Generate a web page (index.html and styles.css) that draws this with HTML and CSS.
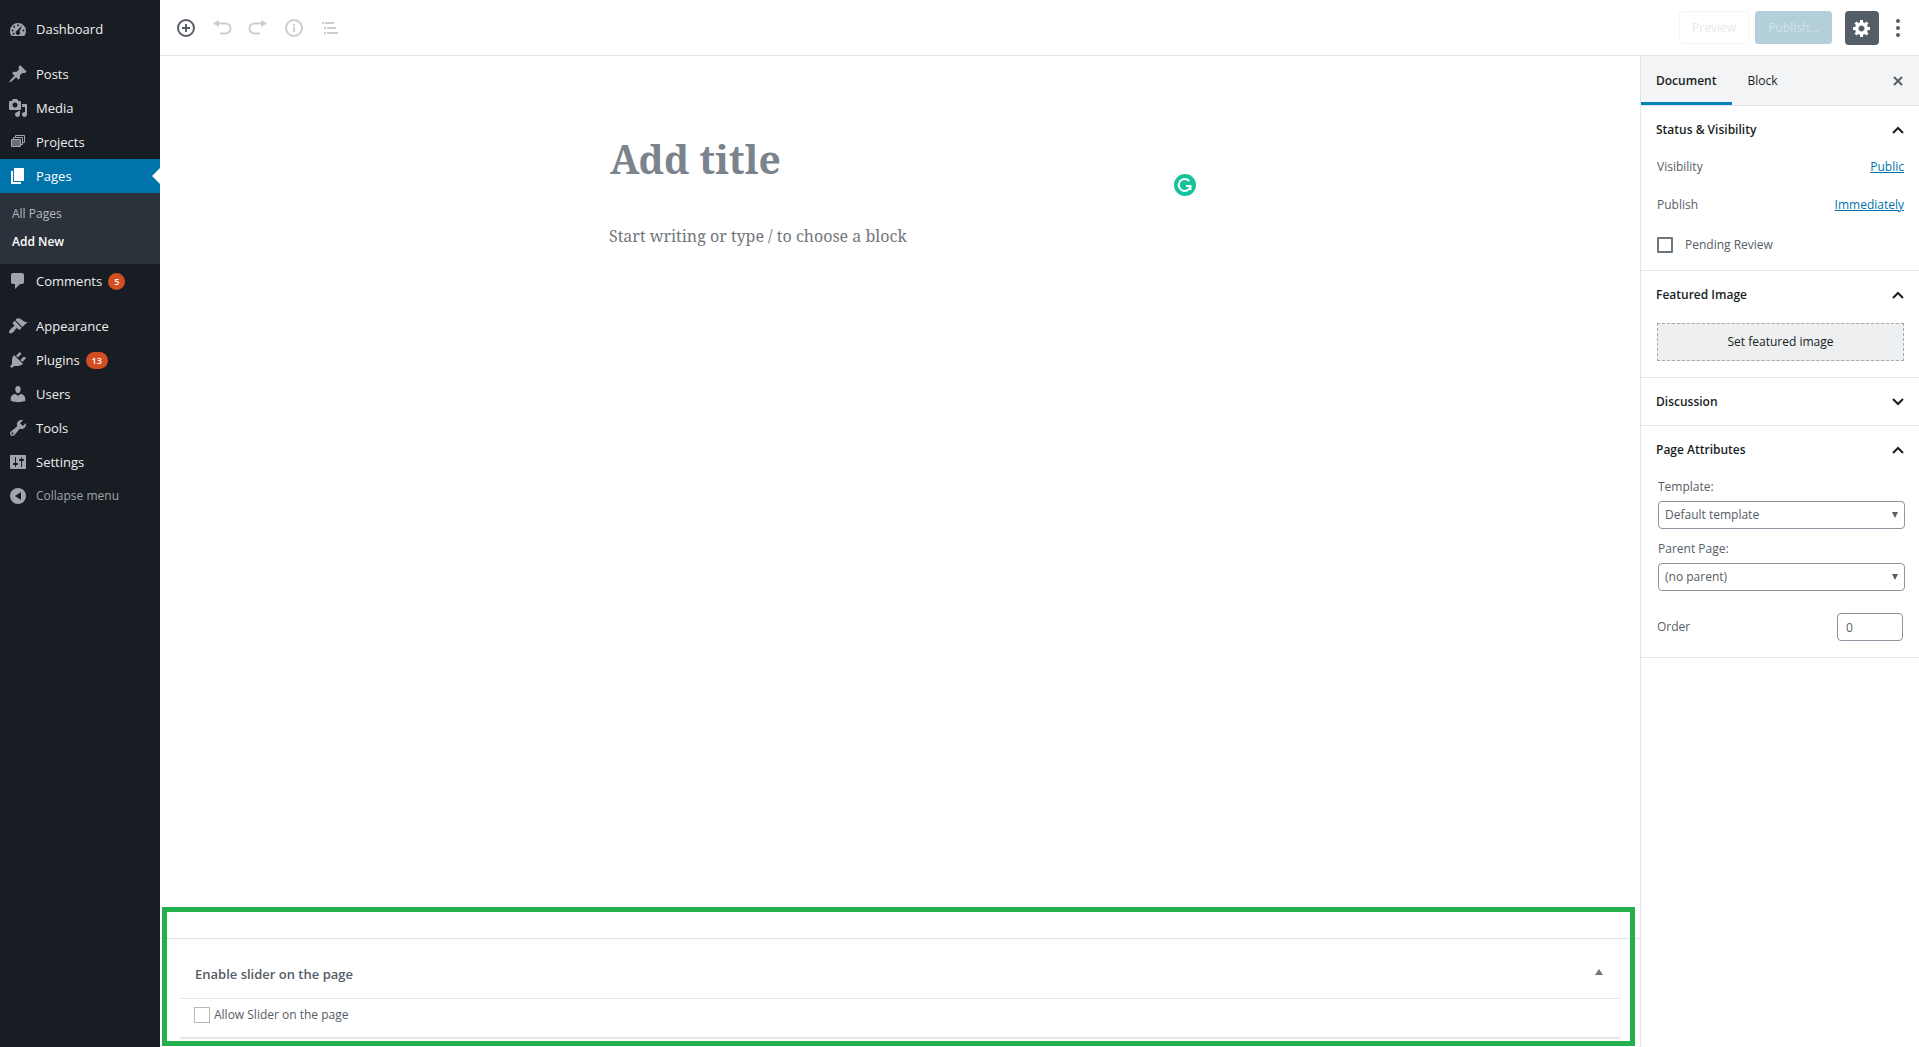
FILE: index.html
```html
<!DOCTYPE html>
<html lang="en">
<head>
    <meta charset="UTF-8">
    <meta name="viewport" content="width=device-width, initial-scale=1.0">
    <title>Add New Page</title>
    <link rel="stylesheet" href="styles.css">
</head>
<body>
    <nav class="menu">
        <a class="item" href="#"><svg viewBox="0 0 20 20"><path fill-rule="evenodd" d="M3.8 17h12.4c1.1-1.3 1.8-3.1 1.8-5a8 8 0 0 0-16 0c0 1.900.7 3.700 1.800 5zM10 5.200a1 1 0 1 1 0 2 1 1 0 0 1 0-2zM6.200 6.700a1 1 0 1 1 0 2 1 1 0 0 1 0-2zM4.600 10.400a1 1 0 1 1 0 2 1 1 0 0 1 0-2zM15.400 10.400a1 1 0 1 1 0 2 1 1 0 0 1 0-2zM14 6.200l-2.300 6.300a2.200 2.200 0 1 1-2.500-.9zM5.500 13.800a1 1 0 1 1 0 2 1 1 0 0 1 0-2z"/></svg>Dashboard</a>
        <a class="item group" href="#"><svg viewBox="0 0 20 20"><path d="M10.440 3.020l1.820-1.820 6.360 6.350-1.830 1.820c-1.050-.68-2.480-.57-3.410.36l-.75.75c-.92.93-1.040 2.350-.35 3.410l-1.830 1.820-2.410-2.410-2.800 2.790c-.42.42-3.380 2.710-3.800 2.290s1.860-3.390 2.280-3.810l2.790-2.790L4.100 9.360l1.830-1.820c1.050.69 2.480.57 3.400-.36l.75-.75c.93-.92 1.050-2.350.36-3.410z"/></svg>Posts</a>
        <a class="item" href="#"><svg viewBox="0 0 20 20"><path fill-rule="evenodd" d="M13 11V4c0-.55-.45-1-1-1h-1.670L9 1H5L3.670 3H2c-.55 0-1 .45-1 1v7c0 .55.45 1 1 1h10c.55 0 1-.45 1-1zM7 4.500c1.380 0 2.500 1.120 2.500 2.500S8.380 9.500 7 9.500 4.500 8.380 4.500 7 5.620 4.500 7 4.500zM14 6h5v10.500c0 1.380-1.120 2.500-2.500 2.500S14 17.880 14 16.500s1.120-2.500 2.500-2.500c.17 0 .34.020.5.050V9h-3V6zm-4 8.050V13h2v3.500c0 1.380-1.120 2.500-2.500 2.500S7 17.880 7 16.500 8.120 14 9.500 14c.17 0 .34.020.5.050z"/></svg>Media</a>
        <a class="item" href="#"><svg class="outline" viewBox="0 0 20 20"><path d="M7.500 5V3.500h9v7H15M5.500 7V5.500h9v7H13"/><path class="front" d="M3.500 7.500h9v7h-9z"/></svg>Projects</a>
        <a class="item current" href="#"><svg viewBox="0 0 20 20"><path d="M6 15V2h10v13H6zm-1 1h8v2H3V5h2v11z"/></svg>Pages</a>
        <div class="submenu">
            <a href="#">All Pages</a>
            <a class="active" href="#">Add New</a>
        </div>
        <a class="item" href="#"><svg viewBox="0 0 20 20"><path d="M5 2h9c1.100 0 2 .9 2 2v7c0 1.100-.9 2-2 2h-2l-5 5v-5H5c-1.100 0-2-.9-2-2V4c0-1.100.9-2 2-2z"/></svg>Comments <span class="count">5</span></a>
        <a class="item group" href="#"><svg viewBox="0 0 20 20"><path d="M14.480 11.060L7.410 3.990l1.500-1.500c.5-.56 2.300-.47 3.510.32 1.210.8 1.430 1.280 2.910 2.100 1.180.64 2.450 1.260 4.450.85zm-.71.71L6.700 4.700 4.930 6.470c-.39.39-.39 1.020 0 1.410l1.060 1.060c.39.39.39 1.030 0 1.420-.6.6-1.430 1.110-2.210 1.690-.35.26-.7.53-1.010.84C1.430 14.230.4 16.080 1.400 17.070c.99 1 2.840-.03 4.180-1.360.31-.31.58-.66.850-1.020.57-.78 1.080-1.610 1.690-2.210.39-.39 1.020-.39 1.410 0l1.060 1.060c.39.39 1.020.39 1.410 0z"/></svg>Appearance</a>
        <a class="item" href="#"><svg viewBox="0 0 20 20"><path d="M13.110 4.360L9.870 7.600 8 5.730l3.240-3.240c.35-.34 1.050-.2 1.560.320.520.510.660 1.210.310 1.550zm-8 1.770l.91-1.120 9.010 9.010-1.190.84c-.71.710-2.630 1.160-3.820 1.160H6.140L4.900 17.260c-.59.590-1.540.590-2.120 0-.59-.58-.59-1.530 0-2.120l1.240-1.240v-3.880c0-1.130.4-3.190 1.090-3.890zm7.260 3.970l3.240-3.240c.340-.350 1.040-.210 1.550.310.520.510.660 1.210.310 1.550l-3.240 3.250z"/></svg>Plugins <span class="count">13</span></a>
        <a class="item" href="#"><svg viewBox="0 0 20 20"><path d="M10 9.250c-2.270 0-2.730-3.440-2.730-3.440C7 4.020 7.820 2 9.970 2c2.160 0 2.980 2.020 2.710 3.810 0 0-.41 3.440-2.680 3.440zm0 2.570L12.720 10c2.390 0 4.520 2.330 4.520 4.530v2.490s-3.650 1.130-7.240 1.130c-3.650 0-7.240-1.130-7.240-1.130v-2.490c0-2.250 1.940-4.480 4.470-4.480z"/></svg>Users</a>
        <a class="item" href="#"><svg viewBox="0 0 20 20"><path fill-rule="evenodd" d="M16.680 9.770c-1.340 1.340-3.300 1.670-4.950.99l-5.410 6.520c-.99.990-2.590.990-3.580 0s-.99-2.590 0-3.570l6.520-5.420c-.68-1.650-.35-3.610.99-4.950 1.280-1.280 3.120-1.620 4.720-1.060l-2.890 2.890 2.820 2.820 2.860-2.870c.53 1.580.18 3.390-1.080 4.650zM3.810 16.210c.4.390 1.040.390 1.430 0 .4-.4.4-1.040 0-1.430-.39-.4-1.030-.4-1.430 0-.39.390-.39 1.030 0 1.430z"/></svg>Tools</a>
        <a class="item" href="#"><svg viewBox="0 0 20 20"><path fill-rule="evenodd" d="M18 16V4c0-.55-.45-1-1-1H3c-.55 0-1 .45-1 1v12c0 .55.450 1 1 1h14c.55 0 1-.450 1-1zM8 11h1c.55 0 1 .450 1 1s-.45 1-1 1H8v1.500c0 .28-.22.5-.5.5s-.5-.22-.5-.5V13H6c-.55 0-1-.450-1-1s.45-1 1-1h1V5.500c0-.28.220-.5.5-.5s.5.220.5.5V11zm5-2h-1c-.55 0-1-.450-1-1s.45-1 1-1h1V5.500c0-.28.220-.5.5-.5s.5.220.5.5V7h1c.55 0 1 .450 1 1s-.45 1-1 1h-1v5.500c0 .280-.22.5-.5.5s-.5-.22-.5-.5V9z"/></svg>Settings</a>
        <button type="button" class="item collapse"><svg viewBox="0 0 20 20"><path fill-rule="evenodd" d="M10 2a8 8 0 1 1 0 16 8 8 0 0 1 0-16zm3 12V6l-6 4z"/></svg>Collapse menu</button>
    </nav>

    <div class="editor">
        <header class="toolbar">
            <button type="button" class="tool enabled" aria-label="Add block"><svg viewBox="0 0 20 20"><circle cx="10" cy="10" r="8"/><path d="M10 6v8M6 10h8"/></svg></button>
            <button type="button" class="tool" aria-label="Undo"><svg viewBox="0 0 20 20"><path class="solid" d="M7 2v7L1 5.500z"/><path d="M6 5.500h7.500a3.800 3.800 0 0 1 0 10H8"/></svg></button>
            <button type="button" class="tool" aria-label="Redo"><svg viewBox="0 0 20 20"><path class="solid" d="M13 2v7l6-3.500z"/><path d="M14 5.500H6.500a3.800 3.800 0 0 0 0 10H12"/></svg></button>
            <button type="button" class="tool" aria-label="Content structure"><svg viewBox="0 0 20 20"><circle cx="10" cy="10" r="8"/><path d="M10 9v5M10 6v2"/></svg></button>
            <button type="button" class="tool" aria-label="Block navigation"><svg viewBox="0 0 20 20"><path d="M5 5h9M7 10h9M7 15h11M2 5h2M4 10h2M4 15h2"/></svg></button>
            <div class="actions">
                <button type="button" class="preview" disabled>Preview</button>
                <button type="button" class="publish" disabled>Publish...</button>
                <button type="button" class="gear" aria-label="Settings"><svg viewBox="0 0 20 20"><path fill-rule="evenodd" d="M18 12h-2.180c-.17.700-.44 1.350-.81 1.930l1.540 1.540-2.100 2.100-1.540-1.540c-.58.360-1.230.630-1.910.790V19H8v-2.180c-.68-.16-1.330-.43-1.910-.79l-1.540 1.540-2.120-2.120 1.540-1.540c-.36-.58-.63-1.230-.79-1.910H1V9.030h2.170c.160-.700.440-1.350.800-1.940L2.430 5.550l2.100-2.100 1.540 1.540c.58-.37 1.240-.64 1.930-.81V2h3v2.180c.68.160 1.330.430 1.910.790l1.540-1.540 2.120 2.120-1.540 1.540c.360.590.640 1.240.800 1.940H18V12zm-8.500 1.500c1.660 0 3-1.340 3-3s-1.340-3-3-3-3 1.340-3 3 1.340 3 3 3z"/></svg></button>
                <button type="button" class="more" aria-label="More tools"><svg viewBox="0 0 6 20"><circle cx="3" cy="3" r="2"/><circle cx="3" cy="10" r="2"/><circle cx="3" cy="17" r="2"/></svg></button>
            </div>
        </header>

        <div class="columns">
            <main class="content">
                <div class="writing">
                    <div class="title-wrap">
                        <input class="title" type="text" placeholder="Add title" aria-label="Add title">
                        <svg class="checker" viewBox="0 0 22 22"><circle class="disc" cx="11" cy="11" r="11"/><path d="M15.200 7A6 6 0 1 0 16.500 12.500M12 12h4.500v4"/></svg>
                    </div>
                    <input class="paragraph" type="text" placeholder="Start writing or type / to choose a block" aria-label="Add block">
                </div>
                <section class="metaboxes">
                    <div class="postbox">
                        <div class="postbox-head">
                            <h2>Enable slider on the page</h2>
                            <button type="button" aria-label="Toggle panel"><svg viewBox="0 0 8 6"><path d="M4 0l4 6H0z"/></svg></button>
                        </div>
                        <div class="postbox-body">
                            <input type="checkbox" id="slider">
                            <label for="slider">Allow Slider on the page</label>
                        </div>
                    </div>
                    <div class="highlight"></div>
                </section>
            </main>

            <aside class="settings">
                <div class="tabs">
                    <button type="button" class="tab selected">Document</button>
                    <button type="button" class="tab">Block</button>
                    <button type="button" class="close" aria-label="Close settings"><svg viewBox="0 0 12 12"><path d="M2 2l8 8M10 2l-8 8"/></svg></button>
                </div>
                <section class="panel">
                    <h2><button type="button">Status &amp; Visibility<svg viewBox="0 0 12 8"><path d="M1 7l5-5 5 5"/></svg></button></h2>
                    <div class="row"><span>Visibility</span><a href="#">Public</a></div>
                    <div class="row"><span>Publish</span><a href="#">Immediately</a></div>
                    <div class="row check">
                        <input type="checkbox" id="pending">
                        <label for="pending">Pending Review</label>
                    </div>
                </section>
                <section class="panel featured">
                    <h2><button type="button">Featured Image<svg viewBox="0 0 12 8"><path d="M1 7l5-5 5 5"/></svg></button></h2>
                    <button type="button" class="set-image">Set featured image</button>
                </section>
                <section class="panel closed">
                    <h2><button type="button">Discussion<svg viewBox="0 0 12 8"><path d="M1 1l5 5 5-5"/></svg></button></h2>
                </section>
                <section class="panel featured">
                    <h2><button type="button">Page Attributes<svg viewBox="0 0 12 8"><path d="M1 7l5-5 5 5"/></svg></button></h2>
                    <div class="field">
                        <label for="template">Template:</label>
                        <select id="template"><option>Default template</option></select>
                    </div>
                    <div class="field">
                        <label for="parent">Parent Page:</label>
                        <select id="parent"><option>(no parent)</option></select>
                    </div>
                    <div class="order">
                        <label for="order">Order</label>
                        <input type="text" id="order" value="0">
                    </div>
                </section>
            </aside>
        </div>
    </div>
</body>
</html>
```
FILE: styles.css
```css
* {
    box-sizing: border-box;
}
body {
    display: flex;
    min-height: 100vh;
    margin: 0;
    background: #fff;
    color: #555d66;
    font-family: "Segoe UI", "Open Sans", "Noto Sans", sans-serif;
    font-size: 12px;
    line-height: 18px;
}
button, input, select {
    font: inherit;
    color: inherit;
}
button {
    padding: 0;
    border: none;
    background: none;
    cursor: pointer;
}
h2 {
    margin: 0;
    font-size: inherit;
}

/* admin menu */
.menu {
    flex: none;
    width: 160px;
    padding-top: 12px;
    background: #181d23;
}
.item {
    position: relative;
    display: flex;
    align-items: center;
    width: 100%;
    height: 34px;
    padding-left: 8px;
    color: #eee;
    font-size: 13px;
    text-decoration: none;
}
.item svg {
    flex: none;
    width: 20px;
    height: 20px;
    margin-right: 8px;
    fill: #a0a5aa;
}
.item .outline {
    fill: none;
    stroke: #a0a5aa;
}
.outline .front {
    fill: #6c7075;
}
.group {
    margin-top: 11px;
}
.current {
    background: #0073aa;
    color: #fff;
}
.current svg {
    fill: #fff;
}
.current::after {
    content: "";
    position: absolute;
    right: 0;
    border: 8px solid transparent;
    border-left: none;
    border-right-color: #fff;
}
.submenu {
    padding: 7px 0 8px;
    background: #2b323a;
}
.submenu a {
    display: block;
    padding: 5px 12px;
    color: #b4b9be;
    text-decoration: none;
}
.submenu .active {
    color: #fff;
    font-weight: 600;
}
.count {
    min-width: 17px;
    margin-left: 6px;
    padding: 0 6px;
    border-radius: 9px;
    background: #d54e21;
    color: #fff;
    font-size: 9px;
    font-weight: 600;
    line-height: 17px;
    text-align: center;
}
.collapse {
    color: #a0a5aa;
    font-size: 12px;
}

/* top bar */
.editor {
    display: flex;
    flex: 1;
    flex-direction: column;
    min-width: 0;
}
.toolbar {
    display: flex;
    align-items: center;
    height: 56px;
    padding: 0 12px 0 8px;
    border-bottom: 1px solid #e2e4e7;
}
.tool {
    width: 36px;
    height: 36px;
    opacity: 0.3;
}
.enabled {
    opacity: 1;
}
.tool svg {
    display: block;
    width: 20px;
    height: 20px;
    margin: 0 auto;
    fill: none;
    stroke: #555d66;
    stroke-width: 2;
}
.tool .solid {
    fill: #555d66;
    stroke: none;
}
.actions {
    display: flex;
    align-items: center;
    margin-left: auto;
}
.preview, .publish {
    height: 33px;
    border: 1px solid #f3f4f4;
    border-radius: 3px;
}
.preview {
    width: 70px;
    margin-right: 6px;
    color: #e6e8ea;
}
.publish {
    width: 77px;
    border-color: #b3cfda;
    background: #b3cfda;
    color: #d0e5ed;
}
.gear {
    width: 34px;
    height: 34px;
    margin: 0 11px 0 13px;
    border-radius: 4px;
    background: #555d66;
}
.gear svg {
    display: block;
    width: 20px;
    height: 20px;
    margin: 0 auto;
    fill: #fff;
}
.more {
    width: 16px;
    height: 34px;
    margin-right: 1px;
}
.more svg {
    display: block;
    height: 20px;
    margin: 0 auto;
    fill: #555d66;
}

/* writing area */
.columns {
    display: flex;
    flex: 1;
}
.content {
    display: flex;
    flex: 1;
    flex-direction: column;
    min-width: 0;
}
.writing {
    width: 100%;
    max-width: 582px;
    margin: 0 auto;
    padding-top: 74px;
    font-family: "Noto Serif", "Liberation Serif", serif;
}
.title-wrap {
    position: relative;
}
.title, .paragraph {
    display: block;
    width: 100%;
    padding: 0;
    border: none;
    outline: none;
}
.title {
    height: 56px;
    padding-left: 1px;
    font-size: 39px;
    font-weight: 700;
}
.paragraph {
    height: 28px;
    margin-top: 36px;
    font-size: 16px;
}
.title::placeholder {
    color: #7b838d;
}
.paragraph::placeholder {
    color: #72777c;
}
.checker {
    position: absolute;
    right: -5px;
    bottom: -10px;
    width: 22px;
    height: 22px;
    fill: none;
    stroke: #fff;
    stroke-width: 2;
}
.disc {
    fill: #15c39a;
    stroke: none;
}

/* meta boxes */
.metaboxes {
    position: relative;
    margin-top: auto;
    padding: 10px 20px 9px;
    border-top: 1px solid #e2e4e7;
}
.postbox {
    border-bottom: 1px solid #e2e4e7;
    box-shadow: 0 1px 1px rgba(0, 0, 0, 0.08);
}
.postbox-head {
    display: flex;
    align-items: center;
    justify-content: space-between;
    height: 50px;
    padding: 0 17px 0 15px;
    border-bottom: 1px solid #e2e4e7;
}
.postbox-head h2 {
    font-size: 13px;
    font-weight: 600;
}
.postbox-head svg {
    display: block;
    width: 8px;
    margin-bottom: 4px;
    fill: #72777c;
}
.postbox-body {
    display: flex;
    align-items: center;
    gap: 4px;
    height: 38px;
    padding: 0 14px 6px;
}
.highlight {
    position: absolute;
    inset: -32px 5px 1px 2px;
    border: 5px solid #24b14d;
    pointer-events: none;
}
input[type="checkbox"] {
    appearance: none;
    width: 16px;
    height: 16px;
    margin: 0;
    border: 2px solid #6c7781;
    border-radius: 1px;
}
.postbox-body input[type="checkbox"] {
    border: 1px solid #b4b9be;
    border-radius: 0;
}

/* settings sidebar */
.settings {
    flex: none;
    width: 279px;
    border-left: 1px solid #e2e4e7;
}
.tabs {
    display: flex;
    align-items: center;
    height: 50px;
    padding-right: 15px;
    border-bottom: 1px solid #e2e4e7;
    background: #f3f4f5;
    color: #191e23;
}
.tab {
    height: 49px;
    padding: 0 16px 0 15px;
    border-bottom: 3px solid transparent;
    border-top: 3px solid transparent;
}
.selected {
    border-bottom-color: #0085ba;
    font-weight: 600;
}
.close {
    margin-left: auto;
}
.close svg {
    display: block;
    width: 12px;
    fill: none;
    stroke: #555d66;
    stroke-width: 2;
}
.panel {
    padding-bottom: 11px;
    border-bottom: 1px solid #e2e4e7;
}
.featured {
    padding-bottom: 16px;
}
.closed {
    padding-bottom: 0;
}
.panel h2 button {
    display: flex;
    align-items: center;
    justify-content: space-between;
    width: 100%;
    height: 47px;
    padding: 0 15px;
    color: #191e23;
    font-weight: 600;
}
.panel h2 svg {
    width: 12px;
    fill: none;
    stroke: #191e23;
    stroke-width: 2;
}
.row {
    display: flex;
    align-items: center;
    justify-content: space-between;
    height: 28px;
    margin-bottom: 10px;
    padding: 0 15px 0 16px;
}
.row a {
    color: #0073aa;
}
.check {
    justify-content: flex-start;
    gap: 12px;
    margin: 12px 0 0;
}
.set-image {
    display: block;
    width: calc(100% - 31px);
    height: 38px;
    margin: 5px 15px 0 16px;
    border: 1px dashed #a2aab2;
    background: #edeff0;
    color: #191e23;
}
.field {
    padding: 5px 14px 0 17px;
}
.field + .field {
    padding-top: 11px;
}
.field label {
    display: block;
    margin-bottom: 5px;
}
select {
    appearance: none;
    display: block;
    width: 100%;
    height: 28px;
    padding: 0 6px;
    border: 1px solid #8d96a0;
    border-radius: 4px;
    background: #fff url("data:image/svg+xml,%3Csvg xmlns='http://www.w3.org/2000/svg' viewBox='0 0 6 6'%3E%3Cpath fill='%23555d66' d='M0 0h6L3 6z'/%3E%3C/svg%3E") no-repeat right 6px center / 6px 6px;
}
.order {
    display: flex;
    align-items: center;
    justify-content: space-between;
    margin-top: 22px;
    padding: 0 16px;
}
.order input {
    width: 66px;
    height: 28px;
    padding: 0 8px;
    border: 1px solid #8d96a0;
    border-radius: 4px;
}
```
